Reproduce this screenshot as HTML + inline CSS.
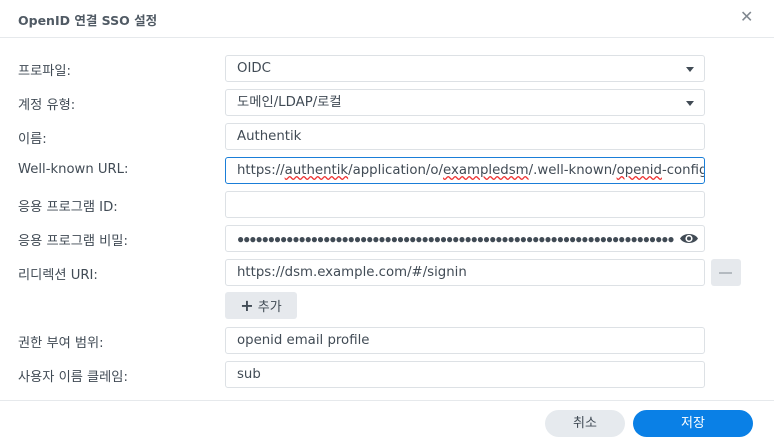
<!DOCTYPE html>
<html><head><meta charset="utf-8"><style>
body{margin:0;width:774px;height:445px;background:#fff;font-family:"DejaVu Sans","Noto Sans CJK KR",sans-serif;color:#414b55;position:relative;overflow:hidden}
.t{position:absolute;left:18px;top:10px;font-size:12.5px;font-weight:bold;color:#505a64}
.x{position:absolute;left:740px;top:7px;font-size:16px;color:#808890;font-family:"Liberation Sans",sans-serif}
.hr{position:absolute;left:0;width:774px;height:1px;background:#e6e9ec}
.l{position:absolute;left:18px;font-size:13.2px;color:#414b55}
.i{position:absolute;left:225px;border:1px solid #dde1e5;border-radius:3px;font-size:13.3px;line-height:26px;padding-left:11px;box-sizing:border-box;width:480px;height:27px;white-space:nowrap;overflow:hidden}
.car{position:absolute;right:10px;top:11px;border-left:4px solid transparent;border-right:4px solid transparent;border-top:5px solid #414b55}
.btn{position:absolute;border-radius:14px;font-size:13px;text-align:center;line-height:27px}
</style></head><body>
<div class="t">OpenID 연결 SSO 설정</div>
<div class="x">✕</div>
<div class="hr" style="top:37px"></div>

<div class="l" style="top:60px">프로파일:</div>
<div class="i" style="top:55px">OIDC<div class="car"></div></div>
<div class="l" style="top:94px">계정 유형:</div>
<div class="i" style="top:89px">도메인/LDAP/로컬<div class="car"></div></div>
<div class="l" style="top:128px">이름:</div>
<div class="i" style="top:123px">Authentik</div>
<div class="l" style="top:162px">Well-known URL:</div>
<div class="i" style="top:157px;border-color:#1a7ed8">https://<span style="text-decoration:underline wavy #e33">authentik</span>/application/o/<span style="text-decoration:underline wavy #e33">exampledsm</span>/.well-known/<span style="text-decoration:underline wavy #e33">openid</span>-config</div>
<div class="l" style="top:196px">응용 프로그램 ID:</div>
<div class="i" style="top:191px"></div>
<div class="l" style="top:230px">응용 프로그램 비밀:</div>
<div class="i" style="top:225px"><div style="position:absolute;left:11px;right:30px;top:0;overflow:hidden;font-size:12px;letter-spacing:-1.1px;font-family:'Liberation Sans',sans-serif">●●●●●●●●●●●●●●●●●●●●●●●●●●●●●●●●●●●●●●●●●●●●●●●●●●●●●●●●●●●●●●●●●●●●●●●●●●●●●●●●●●●●●●●●●</div>
<svg style="position:absolute;right:5px;top:5px" width="20" height="15" viewBox="0 0 20 15"><path d="M1 7.5C4.5 1.5 15.5 1.5 19 7.5C15.5 13.5 4.5 13.5 1 7.5Z" fill="#414b55"/><circle cx="10" cy="7.5" r="3.6" fill="#fff"/><circle cx="10" cy="7.5" r="2" fill="#414b55"/></svg></div>
<div class="l" style="top:264px">리디렉션 URI:</div>
<div class="i" style="top:259px">https://dsm.example.com/#/signin</div>
<div style="position:absolute;left:711px;top:259px;width:30px;height:27px;background:#e6e9ed;border-radius:3px"><div style="position:absolute;left:8px;top:13px;width:13px;height:1.5px;background:#b4bac0"></div></div>
<div style="position:absolute;left:225px;top:292px;width:72px;height:27px;background:#e6e9ed;border-radius:3px;font-size:13px;line-height:27px;text-align:center"><b style="font-size:16px">+</b> 추가</div>
<div class="l" style="top:332px">권한 부여 범위:</div>
<div class="i" style="top:327px">openid email profile</div>
<div class="l" style="top:366px">사용자 이름 클레임:</div>
<div class="i" style="top:361px">sub</div>

<div class="hr" style="top:400px"></div>
<div class="btn" style="left:545px;top:410px;width:80px;background:#e6eaee;color:#414b55">취소</div>
<div class="btn" style="left:633px;top:410px;width:120px;background:#0a80e6;color:#fff">저장</div>
</body></html>
